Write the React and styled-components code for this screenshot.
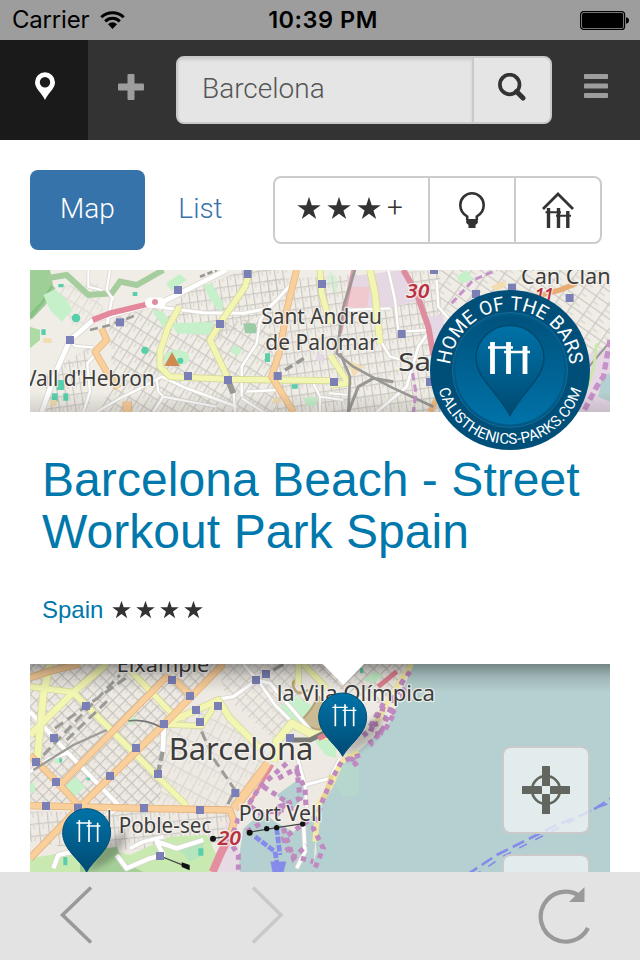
import React from "react";
import styled, { createGlobalStyle } from "styled-components";

const GlobalStyle = createGlobalStyle`
  * {
    box-sizing: border-box;
  }
  body {
    margin: 0;
    background-color: #fff;
  }
`;

const Screen = styled.div`
  width: 640px;
  height: 960px;
  display: flex;
  flex-direction: column;
  overflow: hidden;
  background-color: #fff;
  font-family: Roboto, "Liberation Sans", sans-serif;
`;

const StatusBar = styled.div`
  flex: 0 0 40px;
  display: grid;
  grid-template-columns: 1fr auto 1fr;
  align-items: center;
  padding: 0 11px 0 12px;
  background-color: #9d9d9d;
  color: #000;
  font-family: Inter, sans-serif;
  font-size: 24px;
  line-height: 40px;
`;

const Carrier = styled.div`
  display: flex;
  align-items: center;
  gap: 11px;
  letter-spacing: -0.2px;
`;

const Clock = styled.div`
  padding-left: 5px;
  font-weight: 600;
  font-size: 23.5px;
  letter-spacing: 0.5px;
`;

const BatterySlot = styled.div`
  display: flex;
  justify-content: flex-end;
`;

const Navbar = styled.nav`
  flex: 0 0 100px;
  display: flex;
  align-items: flex-start;
  background-color: #333;
`;

const NavItem = styled.div`
  width: ${(props) => props.$width || 88}px;
  height: 100px;
  display: flex;
  align-items: center;
  justify-content: center;
  padding-bottom: ${(props) => props.$lift || 0}px;
  padding-left: ${(props) => props.$left || 0}px;
  padding-right: ${(props) => props.$right || 0}px;
  background-color: ${(props) => (props.$active ? "#1a1a1a" : "transparent")};
`;

const SearchGroup = styled.div`
  display: flex;
  width: 376px;
  height: 68px;
  margin-top: 16px;
  border: 2px solid #c9c9c9;
  border-radius: 8px;
  background-color: #e5e5e5;
  overflow: hidden;
`;

const SearchField = styled.div`
  width: 294px;
  padding-left: 24px;
  line-height: 62px;
  font-size: 28px;
  font-weight: 300;
  color: #555;
  box-shadow: inset 0 2px 3px rgba(0, 0, 0, 0.1);
`;

const SearchButton = styled.div`
  flex: 1;
  display: flex;
  align-items: center;
  justify-content: center;
  padding-bottom: 6px;
  border-left: 2px solid #c9c9c9;
`;

const Content = styled.main`
  flex: 1;
  min-height: 0;
  overflow: hidden;
  padding: 30px 30px 0;
`;

const Controls = styled.div`
  display: flex;
  align-items: center;
  height: 80px;
  margin-bottom: 20px;
`;

const Tab = styled.div`
  width: ${(props) => props.$width}px;
  height: 80px;
  line-height: 77px;
  text-align: center;
  border-radius: 8px;
  font-size: 28px;
  font-weight: 300;
  color: ${(props) => (props.$active ? "#fff" : "#3673aa")};
  background-color: ${(props) => (props.$active ? "#3673aa" : "transparent")};
`;

const Filters = styled.div`
  display: flex;
  width: 329px;
  height: 68px;
  margin-left: 17px;
  border: 2px solid #ccc;
  border-radius: 8px;
`;

const Filter = styled.div`
  width: ${(props) => props.$width}px;
  display: flex;
  align-items: center;
  justify-content: center;
  gap: 6px;
  color: #333;
  font-size: 28px;
  font-weight: 300;
  > svg {
    flex: none;
  }
  & + & {
    border-left: 2px solid #ccc;
  }
`;

const StarFilter = styled(Filter)`
  justify-content: flex-start;
  padding: 0 0 5px 22px;
`;

const Plus = styled.span`
  line-height: 60px;
`;

const MapBox = styled.div`
  position: relative;
  height: ${(props) => props.$height}px;
  > svg {
    display: block;
  }
`;

const Badge = styled.div`
  position: absolute;
  left: 400px;
  top: 20px;
`;

const Info = styled.section`
  height: 252px;
  padding: 42px 12px 0;
  font-family: "Liberation Sans", Arial, sans-serif;
  color: #0078ab;
`;

const Title = styled.h2`
  margin: 0;
  font-size: 48px;
  font-weight: 400;
  line-height: 52px;
  letter-spacing: 0.06px;
  white-space: nowrap;
`;

const Rating = styled.div`
  display: flex;
  align-items: center;
  gap: 5px;
  margin-top: 37px;
  line-height: 30px;
  font-size: 24px;
  color: #333;
  svg {
    margin-bottom: 2px;
  }
`;

const Country = styled.span`
  margin-right: 4px;
  color: #0078ab;
`;

const MapButtons = styled.div`
  position: absolute;
  left: 472px;
  top: 82px;
  display: flex;
  flex-direction: column;
  gap: 20px;
`;

const MapButton = styled.div`
  width: 88px;
  height: 88px;
  display: flex;
  align-items: center;
  justify-content: center;
  border: 2px solid #cbc9c9;
  border-radius: 8px;
  background-color: rgba(240, 244, 244, 0.78);
  background-clip: padding-box;
`;

const BottomBar = styled.footer`
  flex: 0 0 88px;
  display: flex;
  align-items: flex-start;
  padding: 14px 48px 0 58px;
  background-color: #e3e3e3;
`;

const Forward = styled.div`
  margin-left: 158px;
`;

const Reload = styled.div`
  margin-left: auto;
`;

const Star = ({ size }) => (
  <svg width={size} height={size} viewBox="0 0 24 24">
    <path
      fill="#333"
      d="M12 .8l2.75 8.4H23.7l-7.25 5.3 2.8 8.6L12 17.8l-7.25 5.3 2.8-8.6L.3 9.2h8.95z"
    />
  </svg>
);

// one casing pass and one fill pass, so the joins stay clean
const Roads = ({ items, fill, casing }) => (
  <g fill="none" strokeLinejoin="round">
    {items.map(([w, d]) => (
      <path key={"c" + d} d={d} stroke={casing} strokeWidth={w + 5} />
    ))}
    {items.map(([w, d]) => (
      <path key={d} d={d} stroke={fill} strokeWidth={w} />
    ))}
  </g>
);

const Stations = ({ items }) =>
  items.map(([x, y]) => (
    <rect key={x + "-" + y} x={x - 12} y={y - 12} width="24" height="24" fill="#7a7fb5" />
  ));

const Label = ({ x, y, w, size, color = "#3d3d3d", children, ...rest }) => (
  <text
    x={x}
    y={y}
    textLength={w}
    lengthAdjust="spacingAndGlyphs"
    fontFamily='"Noto Sans", sans-serif'
    fontSize={size}
    fill={color}
    stroke="#f6f4ef"
    strokeOpacity="0.8"
    strokeWidth="8"
    strokeLinejoin="round"
    paintOrder="stroke"
    {...rest}
  >
    {children}
  </text>
);

const Grid = ({ id, w, h, angle, color = "#cbc8c3" }) => (
  <pattern
    id={id}
    width={w}
    height={h}
    patternUnits="userSpaceOnUse"
    patternTransform={`rotate(${angle})`}
  >
    <path d={`M0 1H${w}M1 0V${h}`} stroke={color} strokeWidth="5" fill="none" />
    <path d={`M${w / 2} 0V${h / 2}`} stroke="#d9d6d0" strokeWidth="4" fill="none" />
  </pattern>
);

const Bars = ({ color = "#fff", thick = 5 }) => (
  <g stroke={color} fill="none">
    <path d="M-26 -34V32M3 -34V32M29 -26V32" strokeWidth={thick} />
    <path d="M-35 -25H11M-4 -16H37" strokeWidth={thick * 0.8} />
  </g>
);

const whiteNorth = [
  [14, "M35 456L80 330L120 240L190 180L300 150L400 125L500 75L590 30"],
  [8, "M230 200L245 120L250 110"],
  [9, "M380 140L520 158L640 160L715 145L745 115L800 55"],
  [7, "M715 145L690 180L680 250L635 320L635 410"],
  [7, "M120 240L135 258L190 262"],
  [7, "M160 456L180 395L172 310L200 280"],
  [7, "M200 456L270 415L330 385L395 350"],
  [8, "M395 350L470 385L620 440"],
  [6, "M380 360L385 395L400 410L560 440"],
  [7, "M400 410L370 456"],
  [7, "M610 380L615 456M635 415L700 456M650 395L740 390"],
  [6, "M175 30L175 80L215 90M240 30L230 90L250 120"],
  [6, "M850 370L870 410L870 456M870 410L940 420"],
  [7, "M1075 30L1095 120L1105 215L1200 210"],
  [8, "M1200 210L1165 260L1130 380L1040 456"],
  [7, "M1220 60L1225 140L1260 180L1300 200"],
  [7, "M950 150L1080 145M1050 240L1080 290L1120 300"],
  [6, "M900 400L955 405L955 375"],
];

const yellowNorth = [
  [16, "M448 140L415 200L390 275L390 320L420 350L600 358L900 362"],
  [16, "M660 30L645 80L570 190L540 240L595 358"],
  [16, "M870 30L875 100L900 190"],
  [18, "M1020 30L1035 100L1050 250"],
  [16, "M900 285L955 370L900 375"],
];

const orangeNorth = [
  [16, "M215 205L230 240L195 275L230 335L265 385"],
  [24, "M292 425V456"],
  [16, "M800 30L770 150L750 270L725 350L790 456"],
];

const stationsNorth = [
  [120, 240], [270, 187], [444, 90], [653, 42], [570, 192], [474, 348], [594, 360],
  [743, 348], [876, 72], [1115, 222], [912, 366], [1338, 102], [1446, 83],
  [1619, 114], [1200, 366], [1212, 30],
];

const NorthMap = () => (
  <svg width="580" height="142" viewBox="0 30 1740 426">
    <defs>
      <Grid id="n1" w={26} h={38} angle={32} />
      <Grid id="n2" w={24} h={32} angle={-8} />
      <Grid id="n3" w={34} h={44} angle={-55} />
      <linearGradient id="fadeNorth" x1="0" y1="0" x2="0" y2="1">
        <stop offset="0" stopOpacity="0" />
        <stop offset="1" stopOpacity="0.12" />
      </linearGradient>
    </defs>
    <rect y="30" width="1740" height="426" fill="#f0ede6" />
    <path d="M235 170L400 140L395 340L250 370Z" fill="url(#n1)" />
    <path d="M460 100L640 30H780L700 160L560 240L400 190Z" fill="url(#n2)" />
    <path d="M400 210L720 170L740 456H200L250 380Z" fill="url(#n1)" />
    <path d="M700 60L1230 30L1240 456H740Z" fill="url(#n2)" />
    <path d="M1220 30H1740V456H1220Z" fill="url(#n3)" />
    <path d="M50 340L180 260V456H40Z" fill="url(#n2)" />
    <path d="M80 80L200 60L220 150L130 210Z" fill="url(#n1)" opacity="0.5" />
    <path d="M0 30H60L70 80L40 130L0 180Z" fill="#9dcf96" />
    <path d="M0 200L30 210L30 240L0 265Z" fill="#addba4" />
    <path d="M50 55L110 45L175 105L245 100L270 65L320 75L400 30" fill="none" stroke="#a6cd9e" strokeWidth="18" />
    <path d="M70 80L40 130L0 172" fill="none" stroke="#7fbc76" strokeWidth="16" opacity="0.7" />
    <g fill="#c6f0ca">
      <path d="M40 105L75 88L110 120L128 150L95 185L60 150Z" />
      <path d="M408 70L450 42L470 60L425 92Z" />
      <path d="M425 190L550 185L545 225L440 220Z" />
      <path d="M520 75L545 70L580 130L575 160L540 120Z" />
      <path d="M365 150L400 155L430 200L405 210Z" />
      <ellipse cx="440" cy="293" rx="38" ry="23" />
      <path d="M612 255L637 270L622 288L600 275Z" />
      <path d="M820 415L860 410L860 435L830 440ZM1280 50L1310 30L1330 60L1290 70Z" />
      <path d="M900 30L925 60L920 110L890 60ZM1220 290L1300 320L1240 380L1210 330Z" opacity="0.5" />
    </g>
    <path d="M640 190L675 190L685 220L645 220Z" fill="#9ccba8" />
    <g fill="#e5d7e4">
      <path d="M950 50L1120 30L1170 120L1060 150L960 140Z" />
      <path d="M860 280L885 285L880 305L858 300ZM1190 170L1240 165L1250 280L1200 260ZM1680 280L1740 260V456H1640Z" />
    </g>
    <path d="M960 80H1020L1010 150L950 140Z" fill="#efc9cd" />
    <path d="M1740 340L1715 350L1705 410L1740 425Z" fill="#b5d0d0" />
    <g fill="#59ceaa">
      <circle cx="138" cy="174" r="13" />
      <circle cx="345" cy="271" r="11" />
      <circle cx="451" cy="302" r="9" />
      <path d="M80 360h22v30h-22zM65 400h18v25h-18zM100 400h15v22h-15zM705 280h15v26h-15zM85 72h16v10h-16zM785 373h18v13h-18zM34 208h13v17h-13zM308 96h14v12h-14z" />
    </g>
    <g fill="#f3ddb0">
      <path d="M1380 80l40-18 10 15-30 15zM60 420h20v18h-20zM730 415h20v15h-20zM950 300l50 20-30 30zM40 235h25v14h-25z" />
    </g>
    <Roads items={whiteNorth} fill="#fff" casing="#dcd9d3" />
    <Roads items={yellowNorth} fill="#f3f5b3" casing="#d7d99a" />
    <Roads items={orangeNorth} fill="#f9cf9c" casing="#e6b884" />
    <g fill="none">
      <path d="M188 180L240 160L355 132" stroke="#e3899b" strokeWidth="17" />
      <path d="M360 128H392" stroke="#fff" strokeWidth="30" strokeLinecap="round" />
      <path d="M1120 30L1160 100L1195 200L1210 285" stroke="#dd8d9e" strokeWidth="18" />
      <path d="M970 30L950 120L930 220" stroke="#dd9aa7" strokeWidth="12" />
      <path d="M1475 120L1590 90L1640 70" stroke="#e9ab74" strokeWidth="16" />
      <path d="M1200 456L1230 400" stroke="#f3bd83" strokeWidth="18" />
    </g>
    <circle cx="375" cy="126" r="9" fill="#dd8d9e" />
    <g fill="none" stroke="#999894" strokeWidth="8">
      <path d="M180 210L240 195L320 165" strokeDasharray="24 14" />
      <path d="M590 350L610 400" strokeWidth="18" />
      <path d="M765 330L830 290" strokeDasharray="26 14" strokeWidth="10" />
      <path d="M510 50L560 30" strokeDasharray="16 8" />
      <path d="M975 30L940 140L920 280L970 320L1080 380L1210 440" />
      <path d="M955 456L985 380L1030 355L1090 365" strokeWidth="9" />
      <path d="M930 280L960 350L955 456" />
      <path d="M1660 340L1740 245" strokeWidth="6" />
      <path d="M1270 190L1360 130" strokeDasharray="20 8" strokeWidth="18" opacity="0.5" />
    </g>
    <g fill="none" stroke="#c791c9" strokeWidth="9" strokeDasharray="22 12">
      <path d="M1265 130L1330 60L1400 30M1148 340L1158 400L1150 456" />
      <path d="M1740 240L1720 350L1700 380L1660 456" strokeWidth="16" />
    </g>
    <path d="M1700 250L1690 330L1670 390" stroke="#c9e9a6" strokeWidth="8" fill="none" />
    <path d="M426 276L449 318H403Z" fill="#cf8a50" />
    <Stations items={stationsNorth} />
    <Label x={-18} y={379} w={392} size={64}>Vall d'Hebron</Label>
    <Label x={694} y={192} w={362} size={64}>Sant Andreu</Label>
    <Label x={706} y={269} w={338} size={64}>de Palomar</Label>
    <Label x={1105} y={334} w={184} size={76}>Sant</Label>
    <Label x={1473} y={72} w={300} size={64}>Can Clans</Label>
    <Label x={1128} y={113} w={70} size={60} color="#b83242" fontStyle="italic" fontWeight="600">30</Label>
    <Label x={1514} y={124} w={56} size={54} color="#b83242" fontStyle="italic" fontWeight="600">11</Label>
    <rect y="396" width="1740" height="60" fill="url(#fadeNorth)" />
  </svg>
);

const yellowCity = [
  [20, "M60 27L40 120L22 310"],
  [16, "M0 95L130 112L470 452"],
  [18, "M230 27L130 112L0 240"],
  [16, "M300 45L425 175L465 190"],
  [18, "M395 210L500 165L565 135L600 190L690 280"],
  [14, "M400 208L515 213L565 135"],
  [16, "M805 27V90M820 27L890 100"],
  [22, "M730 320L740 260L785 205L840 235L900 245"],
];

const orangeCity = [
  [17, "M0 68L60 48L150 27"],
  [16, "M410 65L95 385"],
  [17, "M580 27L400 210L150 455L0 610"],
  [16, "M405 65L440 80L485 125"],
  [16, "M0 300L80 380L150 455"],
  [17, "M0 452L340 460L600 465L612 500L600 540"],
  [24, "M612 460L715 325"],
];

const whiteCity = [
  [12, "M0 170L110 290L265 450"],
  [10, "M0 350L60 310L110 295"],
  [14, "M402 205L398 300"],
  [10, "M550 135L610 125L680 75L720 85L840 225"],
  [9, "M640 27L690 85L735 150L800 215"],
  [9, "M800 300L825 390L900 370L930 310"],
  [9, "M825 390L830 456"],
  [13, "M70 640L85 600L130 590"],
  [13, "M260 600L290 640L360 610L400 600L380 560L440 580L520 555"],
  [11, "M230 480L265 460M300 580L340 560L400 545"],
  [10, "M820 500L825 590L800 640"],
];

const stationsCity = [
  [426, 75], [480, 123], [168, 153], [498, 165], [564, 153], [402, 207], [510, 201],
  [72, 249], [318, 279], [18, 321], [240, 363], [384, 357], [78, 381], [48, 453],
  [144, 458], [342, 459], [510, 465], [616, 414], [678, 75], [708, 57], [780, 249],
  [390, 603],
];

// purple dotted pier and beach outlines
const piers = [
  "M770 325L690 395L655 450L690 475L790 460",
  "M745 370L800 340L810 430L735 460",
  "M800 350L825 400L830 500L760 550L780 600L850 620",
  "M700 395L770 440L740 480",
  "M625 490L600 560L625 600L625 651",
  "M760 520L790 610L830 570",
  "M650 530L700 500",
];

const beach = [
  "M1140 50L1110 90L1130 120L1080 130",
  "M1120 75L1085 150L1060 220L1025 265L1000 230",
  "M1095 165L1070 190L1040 180L1020 215",
  "M1060 145L1035 200L1045 240",
  "M1050 160L1095 170L1060 235L1005 215",
  "M990 300L935 320L910 365L880 430L850 520L880 580L850 651",
  "M960 310L985 320L960 340",
];

const Marker = ({ x, y }) => (
  <g transform={`translate(${x} ${y})`}>
    <path d="M0 0L45 -80L120 -130Q130 -60 40 -18Z" fill="#000" opacity="0.24" filter="url(#soft)" />
    <path
      d="M0 -1C-20 -38 -72 -68 -72 -119A72 72 0 0 1 72 -119C72 -68 20 -38 0 -1Z"
      fill="url(#pin)"
      stroke="#004d75"
      strokeWidth="3"
    />
    <g transform="translate(4 -123)">
      <Bars />
    </g>
  </g>
);

const CityMap = () => (
  <svg width="580" height="208" viewBox="0 27 1740 624">
    <defs>
      <Grid id="c1" w={27} h={27} angle={45} color="#c5c2bd" />
      <Grid id="c2" w={28} h={44} angle={28} />
      <Grid id="c3" w={28} h={36} angle={-6} />
      <linearGradient id="pin" x1="0" y1="0" x2="0" y2="1">
        <stop offset="0" stopColor="#0073a8" />
        <stop offset="1" stopColor="#004b73" />
      </linearGradient>
      <linearGradient id="shade" x1="0" y1="0" x2="0" y2="1">
        <stop offset="0" stopOpacity="0.36" />
        <stop offset="0.45" stopOpacity="0.13" />
        <stop offset="1" stopOpacity="0" />
      </linearGradient>
      <filter id="soft" x="-40%" y="-40%" width="180%" height="180%">
        <feGaussianBlur stdDeviation="9" />
      </filter>
    </defs>
    <rect y="27" width="1740" height="624" fill="#b5d0d0" />
    <path
      d="M0 27H1150L1125 90L1080 200L1000 275L930 330L880 430L850 500L860 590L840 651H0Z"
      fill="#eeeae3"
    />
    <path d="M0 27H590L400 210L390 450H0Z" fill="url(#c1)" />
    <path d="M390 220L560 150L720 300L610 460H390Z" fill="url(#c2)" opacity="0.6" />
    <path d="M560 27H800L850 200L740 260L590 130Z" fill="url(#c1)" opacity="0.7" />
    <path d="M0 470H600V560L200 590L0 560Z" fill="url(#c3)" />
    <path d="M840 27H1150L1060 150L940 110Z" fill="url(#c1)" />
    <path d="M640 520L700 470L735 500L790 530L860 470L850 651H620Z" fill="#b5d0d0" />
    <path d="M740 420L810 370L830 420L780 470Z" fill="#b5d0d0" />
    <path d="M0 610L60 600L180 570L300 600L420 545L530 540L560 600L540 651H0Z" fill="#c8eab1" />
    <path d="M150 590L260 575L280 620L340 651H150Z" fill="#a5cf98" />
    <path d="M440 575L520 560L520 600L480 620Z" fill="#b4e5bd" />
    <g fill="#c6f0ca">
      <path d="M105 395L135 365L165 395L135 425Z" />
      <path d="M745 160L790 120L860 160L840 210L790 195Z" />
      <path d="M1000 75L1030 50L1060 60L1030 85ZM850 250L915 240L920 310L885 300Z" />
      <path d="M0 385h15v28H0zM300 175l20 18-20 18-20-18zM80 300l14 14-14 14-14-14z" />
    </g>
    <path d="M920 330H985V420L940 425L915 390Z" fill="#b5d7ce" />
    <path d="M815 195Q860 150 860 120Q900 150 870 225Q835 220 815 195Z" fill="#cbbb95" stroke="#b39f74" strokeWidth="6" />
    <path d="M795 75q-12 12 0 30t40 0" fill="none" stroke="#bba778" strokeWidth="8" />
    <path d="M590 500L620 500L630 651H540Z" fill="#e6dbe5" />
    <Roads items={whiteCity} fill="#fff" casing="#d9d6d0" />
    <Roads items={yellowCity} fill="#f3f5b3" casing="#d8dba0" />
    <Roads items={orangeCity} fill="#f9cf9c" casing="#e5b47e" />
    <g fill="none" stroke="#9b9b97" strokeWidth="9">
      <path d="M40 300L270 60M75 220L300 60M110 255L240 130" strokeDasharray="30 16" />
      <path d="M10 345L130 270L230 225" strokeWidth="7" />
      <path d="M295 198Q340 190 390 215" strokeWidth="5" stroke="#777" />
      <path d="M515 230L550 310L615 405L590 455" strokeDasharray="30 14" />
      <path d="M398 290L385 350" strokeDasharray="28 12" strokeWidth="13" />
      <path d="M785 255L840 255L900 225" strokeWidth="15" stroke="#7d7d78" />
      <path d="M730 45L760 27" strokeWidth="10" />
    </g>
    <path d="M600 540L570 600L548 651" stroke="#e38fa0" strokeWidth="24" fill="none" />
    <path d="M728 330L650 460" stroke="#df8e9d" strokeWidth="10" fill="none" />
    <path d="M1100 50L1045 95M865 250L900 235" stroke="#df8290" strokeWidth="15" fill="none" />
    <path d="M1145 27L1090 110L1040 200M985 290L935 320L900 395L865 450L855 560" fill="none" stroke="#f3e9a4" strokeWidth="16" />
    <path d="M905 360L890 410L880 430" stroke="#ead68d" strokeWidth="14" fill="none" />
    <g fill="none" stroke="#c08ac1" strokeWidth="15" strokeDasharray="16 14">
      {piers.map((d) => (
        <path key={d} d={d} />
      ))}
      {beach.map((d) => (
        <path key={d} d={d} />
      ))}
    </g>
    <g fill="none" stroke="#858bea">
      <path d="M675 545L735 590L745 651M740 520L750 600" strokeWidth="14" strokeDasharray="20 5" />
      <path d="M722 620H768L760 651H728Z" fill="#858bea" />
      <path d="M1310 660L1400 600L1480 560L1580 510L1680 470L1760 420" strokeWidth="8" strokeDasharray="38 16" />
      <path d="M1330 664L1420 604L1500 562L1600 512L1690 462L1750 440" strokeWidth="5" strokeDasharray="26 28" />
    </g>
    <path d="M390 603L470 635M550 550L590 545M655 532L740 518L825 505" stroke="#444" strokeWidth="4" fill="none" />
    <g fill="#111">
      <circle cx="549" cy="551" r="9" />
      <circle cx="659" cy="533" r="9" />
      <circle cx="710" cy="521" r="8" />
      <circle cx="740" cy="518" r="8" />
      <circle cx="818" cy="507" r="8" />
      <path d="M455 622l24 8v16l-24-10z" />
    </g>
    <g fill="#59ceaa">
      <path d="M100 606h12v25h-12zM505 580h15v22h-15zM88 310h8v12h-8zM170 368h10v8h-10zM990 40h10v14h-10z" />
    </g>
    <Stations items={stationsCity} />
    <Label x={260} y={50} w={278} size={62}>Eixample</Label>
    <Label x={740} y={138} w={475} size={64}>la Vila Olímpica</Label>
    <Label x={416} y={315} w={434} size={92}>Barcelona</Label>
    <Label x={266} y={535} w={278} size={63}>Poble-sec</Label>
    <Label x={626} y={498} w={250} size={64}>Port Vell</Label>
    <Label x={232} y={510} w={12} size={58}>l</Label>
    <Label x={563} y={570} w={70} size={60} color="#b83242" fontStyle="italic" fontWeight="600">20</Label>
    <rect y="27" width="1740" height="85" fill="url(#shade)" />
    <path d="M878 27L940 90L1002 27Z" fill="#fff" />
    <Marker x={938} y={305} />
    <Marker x={170} y={652} />
  </svg>
);

const HomeBadge = () => (
  <svg width="160" height="160" viewBox="-80 -80 160 160">
    <defs>
      <linearGradient id="disc" x1="0" y1="0" x2="0" y2="1">
        <stop offset="0" stopColor="#00527d" />
        <stop offset="1" stopColor="#0072a8" />
      </linearGradient>
      <linearGradient id="drop" x1="0" y1="0" x2="0" y2="1">
        <stop offset="0" stopColor="#0072a8" />
        <stop offset="1" stopColor="#004b72" />
      </linearGradient>
      <path id="arcTop" d="M-60 0A60 60 0 0 1 60 0" />
      <path id="arcBottom" d="M-74 0A74 74 0 0 0 74 0" />
    </defs>
    <circle r="80" fill="#004f78" />
    <circle r="57.5" fill="#005a87" stroke="#1f6f9b" strokeWidth="0.8" />
    <circle r="54.5" fill="url(#disc)" />
    <path
      d="M0 45.5C-12 22 -34 8 -34 -12A34 32.5 0 0 1 34 -12C34 8 12 22 0 45.5Z"
      fill="url(#drop)"
      stroke="#004a70"
      strokeWidth="1.6"
    />
    <path d="M-17.5 -28V4M-1.5 -28V4M15 -24V4" stroke="#fff" strokeWidth="4.8" />
    <path d="M-22 -22.5H3M-6 -18H20" stroke="#fff" strokeWidth="2.6" />
    <g fill="#fff" fontFamily="Roboto, sans-serif" textAnchor="middle">
      <text fontSize="19.2" wordSpacing="0.5">
        <textPath href="#arcTop" startOffset="50%">HOME OF THE BARS</textPath>
      </text>
      <text fontSize="15" letterSpacing="0.15">
        <textPath href="#arcBottom" startOffset="50%">CALISTHENICS-PARKS.COM</textPath>
      </text>
    </g>
  </svg>
);

const App = () => {
  return (
    <>
      <GlobalStyle />
      <Screen>
        <StatusBar>
          <Carrier>
            Carrier
            <svg width="25" height="18" viewBox="0 0 25 18">
              <g fill="none" stroke="#000" strokeWidth="3">
                <path d="M1.3 6.2A16 16 0 0 1 23.7 6.2" />
                <path d="M5.2 10.3A10.5 10.5 0 0 1 19.8 10.3" />
              </g>
              <path d="M12.5 18L8 13.2A6.4 6.4 0 0 1 17 13.2Z" />
            </svg>
          </Carrier>
          <Clock>10:39 PM</Clock>
          <BatterySlot>
            <svg width="49" height="19" viewBox="0 0 49 19">
              <rect x="0.6" y="0.6" width="44" height="17.8" rx="3" fill="none" stroke="#000" strokeWidth="1.2" />
              <rect x="2" y="2" width="41.2" height="15" rx="1.6" />
              <path d="M46 6.2Q49 6.8 49 9.5T46 12.8Z" />
            </svg>
          </BatterySlot>
        </StatusBar>

        <Navbar>
          <NavItem $active $lift={8} $left={2}>
            <svg width="22" height="28" viewBox="0 0 22 28">
              <path
                fill="#fff"
                fillRule="evenodd"
                d="M11 28C8 21 1 17 1 10.3A10 10 0 0 1 21 10.3C21 17 14 21 11 28ZM11 5A5.2 5.2 0 1 0 11 15.4 5.2 5.2 0 0 0 11 5Z"
              />
            </svg>
          </NavItem>
          <NavItem $lift={6} $right={2}>
            <svg width="26" height="26" viewBox="0 0 26 26" fill="#9d9d9d">
              <rect x="9.5" width="7" height="26" rx="1" />
              <rect y="9.5" width="26" height="7" rx="1" />
            </svg>
          </NavItem>
          <SearchGroup>
            <SearchField>Barcelona</SearchField>
            <SearchButton>
              <svg width="30" height="28" viewBox="0 0 30 28" fill="none" stroke="#333">
                <circle cx="12.7" cy="11.5" r="9.8" strokeWidth="3.7" />
                <path d="M19.5 18.5L26 25" strokeWidth="5" strokeLinecap="round" />
              </svg>
            </SearchButton>
          </SearchGroup>
          <NavItem $lift={8}>
            <svg width="24" height="24" viewBox="0 0 24 24" fill="#9d9d9d">
              <rect width="24" height="5" rx="0.8" />
              <rect y="9.5" width="24" height="5" rx="0.8" />
              <rect y="19" width="24" height="5" rx="0.8" />
            </svg>
          </NavItem>
        </Navbar>

        <Content>
          <Controls>
            <Tab $active $width={115}>Map</Tab>
            <Tab $width={111}>List</Tab>
            <Filters>
              <StarFilter $width={153}>
                <Star size={24} />
                <Star size={24} />
                <Star size={24} />
                <Plus>+</Plus>
              </StarFilter>
              <Filter $width={86}>
                <svg width="26" height="36" viewBox="0 0 26 36">
                  <path
                    d="M8.2 28V24.5Q1.3 20.5 1.3 13A11.7 11.7 0 0 1 24.7 13Q24.7 20.5 17.8 24.5V28"
                    fill="none"
                    stroke="#333"
                    strokeWidth="2.6"
                  />
                  <path d="M7.2 27H18.8V31L16.5 33V36H9.5V33L7.2 31Z" fill="#333" />
                </svg>
              </Filter>
              <Filter $width={86}>
                <svg width="32" height="36" viewBox="0 0 32 36" fill="none" stroke="#333">
                  <path d="M1 17L16 2L31 17" strokeWidth="2.8" />
                  <path d="M6.5 16V36M16.5 16V36M25.8 19V36" strokeWidth="3.4" />
                  <path d="M3.5 20.3H19M14 23.7H29" strokeWidth="2" />
                </svg>
              </Filter>
            </Filters>
          </Controls>

          <MapBox $height={142}>
            <NorthMap />
            <Badge>
              <HomeBadge />
            </Badge>
          </MapBox>

          <Info>
            <Title>
              Barcelona Beach - Street
              <br />
              Workout Park Spain
            </Title>
            <Rating>
              <Country>Spain</Country>
              <Star size={19} />
              <Star size={19} />
              <Star size={19} />
              <Star size={19} />
            </Rating>
          </Info>

          <MapBox $height={208}>
            <CityMap />
            <MapButtons>
              <MapButton>
                <svg width="48" height="48" viewBox="0 0 48 48">
                  <circle cx="24" cy="24" r="14" fill="none" stroke="#62665f" strokeWidth="2.6" />
                  <g fill="#62665f">
                    <rect x="20" width="8" height="20" rx="0.6" />
                    <rect x="20" y="28" width="8" height="20" rx="0.6" />
                    <rect y="20" width="20" height="8" rx="0.6" />
                    <rect x="28" y="20" width="20" height="8" rx="0.6" />
                  </g>
                </svg>
              </MapButton>
              <MapButton />
            </MapButtons>
          </MapBox>
        </Content>

        <BottomBar>
          <svg width="34" height="58" viewBox="0 0 34 58" fill="none">
            <path d="M33 1.5L4.5 29L33 56.5" stroke="#999" strokeWidth="3.6" />
          </svg>
          <Forward>
            <svg width="34" height="58" viewBox="0 0 34 58" fill="none">
              <path d="M3 1.5L31 29L3 56.5" stroke="#c9c9c9" strokeWidth="3.6" />
            </svg>
          </Forward>
          <Reload>
            <svg width="56" height="58" viewBox="0 0 56 58">
              <path d="M43 9.5A25 25 0 1 0 52 42" fill="none" stroke="#999" strokeWidth="4.2" />
              <path d="M48.5 1V16H33Z" fill="#999" />
            </svg>
          </Reload>
        </BottomBar>
      </Screen>
    </>
  );
};

export default App;
